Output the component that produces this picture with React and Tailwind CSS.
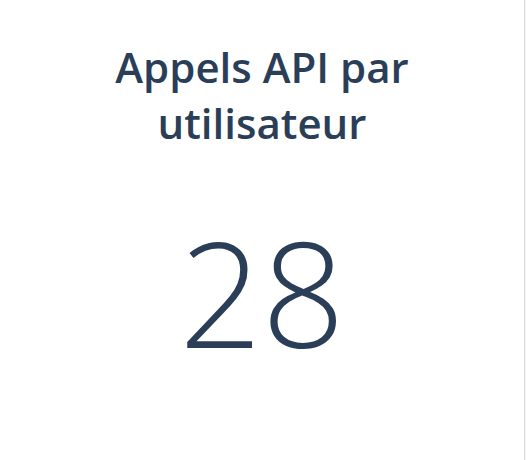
export default function App() {
  return (
    <div className="flex h-[460px] w-[526px] bg-[#f2f2f2] font-['Open_Sans',sans-serif]">
      <div className="flex w-[525px] flex-col items-center border-r border-[#dcdcdc] bg-white pt-[39px] text-[#2b3e58]">
        <h2 className="w-[340px] text-center text-[42px] font-semibold leading-[56px]">
          Appels API par utilisateur
        </h2>
        <div className="mt-[68px] text-[145px] font-light leading-none">28</div>
      </div>
    </div>
  );
}
